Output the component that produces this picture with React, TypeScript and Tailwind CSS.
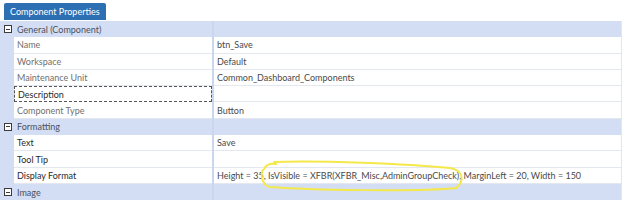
import React from "react";

type Row = { label: string; value?: string; dim?: boolean; focus?: boolean };
type Section = { title: string; rows: Row[] };

const SECTIONS: Section[] = [
  {
    title: "General (Component)",
    rows: [
      { label: "Name", value: "btn_Save", dim: true },
      { label: "Workspace", value: "Default", dim: true },
      { label: "Maintenance Unit", value: "Common_Dashboard_Components", dim: true },
      { label: "Description", focus: true },
      { label: "Component Type", value: "Button", dim: true },
    ],
  },
  {
    title: "Formatting",
    rows: [
      { label: "Text", value: "Save" },
      { label: "Tool Tip" },
      {
        label: "Display Format",
        value: "Height = 35, IsVisible = XFBR(XFBR_Misc,AdminGroupCheck), MarginLeft = 20, Width = 150",
      },
    ],
  },
  { title: "Image", rows: [] },
];

function Collapse() {
  return (
    <span className="shrink-0 w-[8px] h-[8px] border border-[#3c3c3c] flex items-center justify-center bg-white">
      <span className="w-[4px] h-px bg-[#3c3c3c]" />
    </span>
  );
}

export default function App() {
  return (
    <div className="relative w-[627px] h-[202px] bg-white overflow-hidden text-[9px] leading-none" style={{ fontFamily: 'Lato, "Open Sans", sans-serif' }}>
      <div className="pl-[4px] pt-[3px]">
        <div className="inline-flex items-center h-[17px] px-[6px] bg-[#2d6fb3] text-white rounded-t-[2px] text-[9px]">
          Component Properties
        </div>
      </div>
      <div className="mt-[1px] w-[622px] border-r border-[#dfe7f5]">
        {SECTIONS.map((s) => (
          <div key={s.title}>
            <div className="flex h-[16.3px] bg-[#d3def4]">
              <div className="shrink-0 w-[212px] flex items-center gap-[5px] pl-[4px] text-[#4a5160]">
                <Collapse />
                <span>{s.title}</span>
              </div>
              <div className="shrink-0 w-[2px] bg-[#c9d6ee]" />
              <div className="flex-1" />
            </div>
            {s.rows.map((r) => (
              <div key={r.label} className="flex h-[16.3px]">
                <div className="shrink-0 w-[14px] bg-[#d3def4]" />
                <div
                  className={
                    "shrink-0 w-[198px] flex items-center pl-[3px] border-b " +
                    (r.focus ? "border border-dashed border-[#555] " : "border-[#e3e8f0] ") +
                    (r.dim ? "text-[#707070]" : "text-[#2a2a2a]")
                  }
                >
                  {r.label}
                </div>
                <div className="shrink-0 w-[2px] bg-[#c9d6ee]" />
                <div className="flex-1 min-w-0 flex items-center pl-[3px] border-b border-[#e3e8f0] text-[#4a4a4a] whitespace-nowrap">
                  {r.value}
                </div>
              </div>
            ))}
          </div>
        ))}
      </div>
      <svg className="absolute left-[258px] top-[158px]" width="210" height="36" viewBox="0 0 210 36" fill="none">
        <path
          d="M16 4 C 60 2, 150 6, 192 10 C 204 12, 208 22, 198 30 C 160 34, 50 32, 12 29 C 3 27, 2 14, 6 11 C 8 7, 12 5, 18 6"
          stroke="#f4e84a"
          strokeWidth="2"
          strokeLinecap="round"
          fill="none"
        />
      </svg>
    </div>
  );
}
